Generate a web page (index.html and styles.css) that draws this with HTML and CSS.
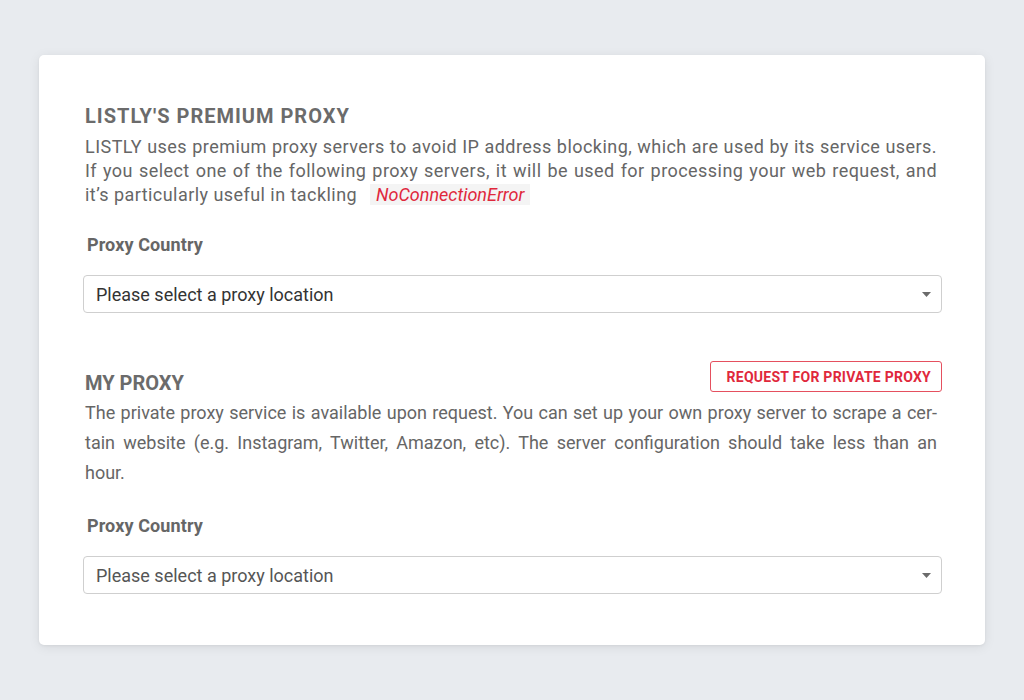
FILE: index.html
```html
<!DOCTYPE html>
<html lang="en">
<head>
<meta charset="utf-8">
<title>Proxy settings</title>
<link rel="stylesheet" href="styles.css">
</head>
<body>
<div class="card">
  <section class="section">
    <h2 class="title wide">LISTLY'S PREMIUM PROXY</h2>
    <p class="desc">LISTLY uses premium proxy servers to avoid IP address blocking, which are used by its service users. If you select one of the following proxy servers, it will be used for processing your web request, and it’s particularly useful in tackling <code class="err">NoConnectionError</code></p>
    <label class="label">Proxy Country</label>
    <div class="select dark">
      <span>Please select a proxy location</span>
      <svg class="caret" width="9" height="5" viewBox="0 0 9 5"><path d="M0 0H9L4.5 5Z" fill="#6b6b6b"/></svg>
    </div>
  </section>
  <section class="section second">
    <div class="head">
      <h2 class="title">MY PROXY</h2>
      <button class="btn">REQUEST FOR PRIVATE PROXY</button>
    </div>
    <p class="desc loose">The private proxy service is available upon request. You can set up your own proxy server to scrape a cer-<br>tain website (e.g. Instagram, Twitter, Amazon, etc). The server configuration should take less than an<br>hour.</p>
    <label class="label">Proxy Country</label>
    <div class="select">
      <span>Please select a proxy location</span>
      <svg class="caret" width="9" height="5" viewBox="0 0 9 5"><path d="M0 0H9L4.5 5Z" fill="#6b6b6b"/></svg>
    </div>
  </section>
</div>
</body>
</html>
```
FILE: styles.css
```css
* { box-sizing: border-box; }
html, body { margin: 0; padding: 0; }
body {
  background: #e8ebef;
  font-family: Roboto, "Liberation Sans", sans-serif;
  width: 1024px;
  height: 700px;
  padding: 55px 39px;
}
.card {
  background: #fff;
  border-radius: 5px;
  box-shadow: 0 2px 12px rgba(0,0,0,0.08), 0 1px 3px rgba(0,0,0,0.05);
  padding: 49px 43px 50px 44px;
  height: 590px;
}
.section { display: flex; flex-direction: column; }
.second { margin-top: 48px; }
.title {
  margin: 0;
  padding-left: 2px;
  font-size: 20px;
  line-height: 24px;
  font-weight: 700;
  color: #6b6b6b;
  letter-spacing: 0;
}
.title.wide { letter-spacing: 1px; }
.desc {
  margin: 7px 0 0;
  padding: 0 5px 0 2px;
  font-size: 18px;
  line-height: 24px;
  color: #666;
  letter-spacing: 0.45px;
  text-align: justify;
}
.desc.loose {
  line-height: 30px;
  margin-top: 3px;
  letter-spacing: 0;
  word-spacing: -1px;
  text-align-last: justify;
}
.err {
  font-family: Roboto, "Liberation Sans", sans-serif;
  font-style: italic;
  font-size: 18px;
  color: #e0283c;
  background: #f4f4f4;
  padding: 0 6px;
  margin-left: 8px;
  letter-spacing: 0;
}
.label {
  display: block;
  margin-top: 26px;
  padding-left: 4px;
  font-size: 18px;
  line-height: 24px;
  font-weight: 700;
  color: #666;
  letter-spacing: 0.1px;
}
.select {
  margin-top: 18px;
  height: 38px;
  border: 1px solid #cfcfcf;
  border-radius: 4px;
  display: flex;
  align-items: center;
  justify-content: space-between;
  padding: 0 10px 0 12px;
  font-size: 18px;
  color: #555;
  letter-spacing: 0;
}
.select.dark { color: #333; }
.caret { display: block; }
.head {
  display: flex;
  justify-content: space-between;
  align-items: flex-end;
}
.btn {
  font-family: Roboto, "Liberation Sans", sans-serif;
  height: 31px;
  margin-bottom: 3px;
  padding: 0 10px 0 16px;
  background: #fff;
  border: 1px solid #e5505f;
  border-radius: 3px;
  color: #e0283c;
  font-size: 14px;
  font-weight: 700;
  letter-spacing: 0.25px;
}
```
